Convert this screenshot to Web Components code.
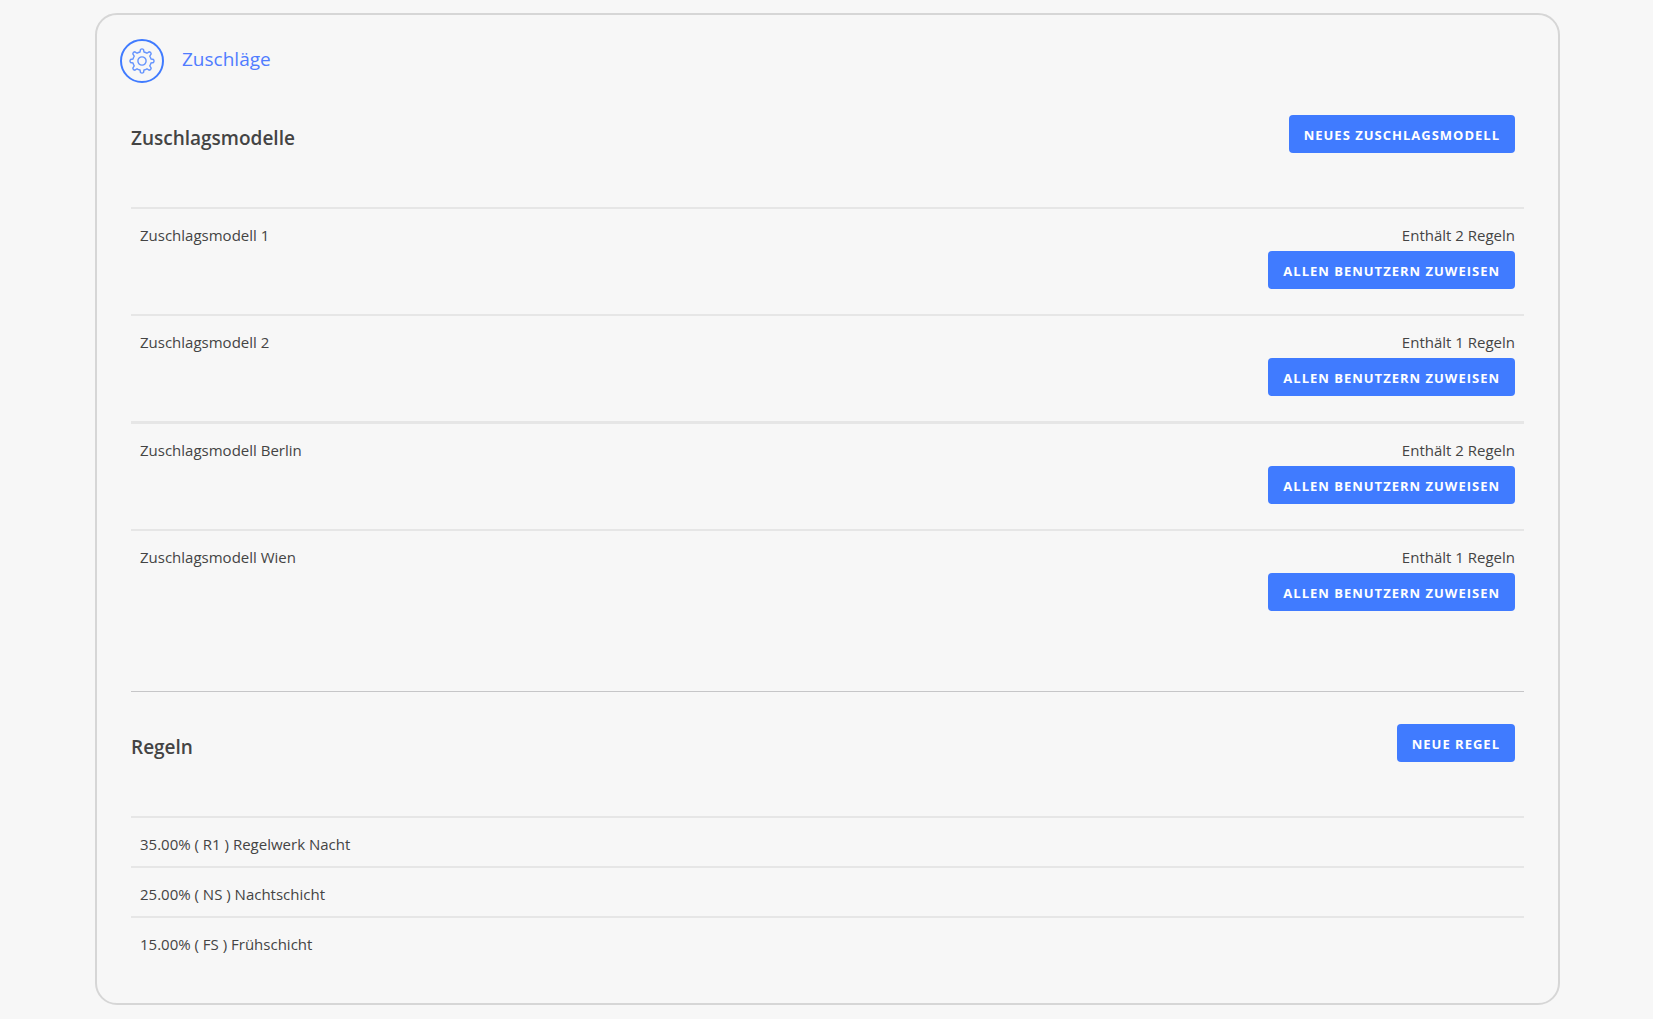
<!DOCTYPE html>
<html lang="de">
<head>
<meta charset="utf-8">
<title>Zuschläge</title>
<style>
  body {
    margin: 0;
    padding: 13px 93px 15px 95px;
    background: #f7f7f7;
    color: #444;
    font: 15px/24px "Segoe UI", "Open Sans", sans-serif;
  }
</style>
</head>
<body>
<settings-card>
  <gear-badge slot="icon"></gear-badge>
  <span slot="title">Zuschläge</span>
  <list-section>
    <span slot="title">Zuschlagsmodelle</span>
    <action-button slot="action">NEUES ZUSCHLAGSMODELL</action-button>
    <model-row count="2">Zuschlagsmodell 1</model-row>
    <model-row count="1">Zuschlagsmodell 2</model-row>
    <model-row count="2" strong>Zuschlagsmodell Berlin</model-row>
    <model-row count="1">Zuschlagsmodell Wien</model-row>
  </list-section>
  <section-divider></section-divider>
  <list-section>
    <span slot="title">Regeln</span>
    <action-button slot="action">NEUE REGEL</action-button>
    <rule-row>35.00% ( R1 ) Regelwerk Nacht</rule-row>
    <rule-row>25.00% ( NS ) Nachtschicht</rule-row>
    <rule-row>15.00% ( FS ) Frühschicht</rule-row>
  </list-section>
</settings-card>
<script>
  function define(name, html, setup) {
    const template = document.createElement('template');
    template.innerHTML = html;
    customElements.define(name, class extends HTMLElement {
      constructor() {
        super();
        this.attachShadow({ mode: 'open' }).append(template.content.cloneNode(true));
      }
      connectedCallback() {
        if (setup) setup(this, this.shadowRoot);
      }
    });
  }

  define('gear-badge', `
    <style>
      :host { display: block; width: 44px; height: 44px; }
      svg { display: block; }
    </style>
    <svg width="44" height="44" viewBox="-22 -22 44 44" fill="none" stroke="#407bff" aria-hidden="true">
      <circle r="21" stroke-width="2"/>
      <circle r="4.1" stroke-width="1.4" opacity=".8"/>
      <path stroke-width="1.4" stroke-linejoin="round" opacity=".8"/>
    </svg>`, (host, root) => {
    // One tooth is rotated eight times; arcs of the gear's body join neighbouring teeth.
    const tooth = [[-2, -9], [-1.5, -11.5], [1.5, -11.5], [2, -9]];
    let d = '';
    for (let i = 0; i < 8; i++) {
      const a = i * Math.PI / 4, c = Math.cos(a), s = Math.sin(a);
      const p = tooth.map(([x, y]) => (x * c - y * s).toFixed(2) + ' ' + (x * s + y * c).toFixed(2));
      d += (i ? 'A14 14 0 0 1 ' : 'M') + p[0] + 'L' + p[1] + 'A2.4 2.4 0 0 1 ' + p[2] + 'L' + p[3];
    }
    root.querySelector('path').setAttribute('d', d + 'A14 14 0 0 1 -2 -9Z');
  });

  define('action-button', `
    <style>
      :host { display: inline-flex; }
      button {
        height: 38px; padding: 2px 15px 0; border: 0; border-radius: 4px;
        background: #407bff; color: #fff; cursor: pointer;
        font: 700 13px/20px "Segoe UI", "Open Sans", sans-serif;
        letter-spacing: 1px; white-space: nowrap;
      }
    </style>
    <button type="button"><slot></slot></button>`);

  define('settings-card', `
    <style>
      :host { display: block; padding: 24px 34px 37px; border: 2px solid #d6d6d6; border-radius: 22px; }
      header { display: flex; align-items: center; gap: 18px; margin: 0 0 32px -11px; }
      h1 { margin: 0; padding-bottom: 4px; color: #507cff; font-size: 19px; line-height: 28px; font-weight: 400; }
    </style>
    <header><slot name="icon"></slot><h1><slot name="title"></slot></h1></header>
    <slot></slot>`);

  define('list-section', `
    <style>
      :host { display: block; }
      header { display: flex; justify-content: space-between; align-items: flex-start; padding: 0 9px 54px 0; }
      h2 { margin: 0; padding-top: 9px; font-size: 19px; line-height: 28px; font-weight: 600; }
    </style>
    <header><h2><slot name="title"></slot></h2><slot name="action"></slot></header>
    <div role="list"><slot></slot></div>`);

  define('section-divider', `
    <style>
      :host { display: block; padding: 55px 0 32px; }
      hr { margin: 0; border: 0; border-top: 1px solid #c6c6c8; }
    </style>
    <hr>`);

  define('model-row', `
    <style>
      :host { display: flex; justify-content: space-between; padding: 14px 9px 25px; border-top: 2px solid #e6e6e6; }
      :host([strong]) { border-top-width: 3px; }
      .side { display: flex; flex-direction: column; align-items: flex-end; gap: 4px; }
    </style>
    <div><slot></slot></div>
    <div class="side"><span class="count"></span><action-button>ALLEN BENUTZERN ZUWEISEN</action-button></div>`,
    (host, root) => {
      host.setAttribute('role', 'listitem');
      root.querySelector('.count').textContent = 'Enthält ' + host.getAttribute('count') + ' Regeln';
    });

  define('rule-row', `
    <style>
      :host { display: block; padding: 14px 9px 10px; border-top: 2px solid #e6e6e6; }
    </style>
    <slot></slot>`, host => host.setAttribute('role', 'listitem'));
</script>
</body>
</html>
